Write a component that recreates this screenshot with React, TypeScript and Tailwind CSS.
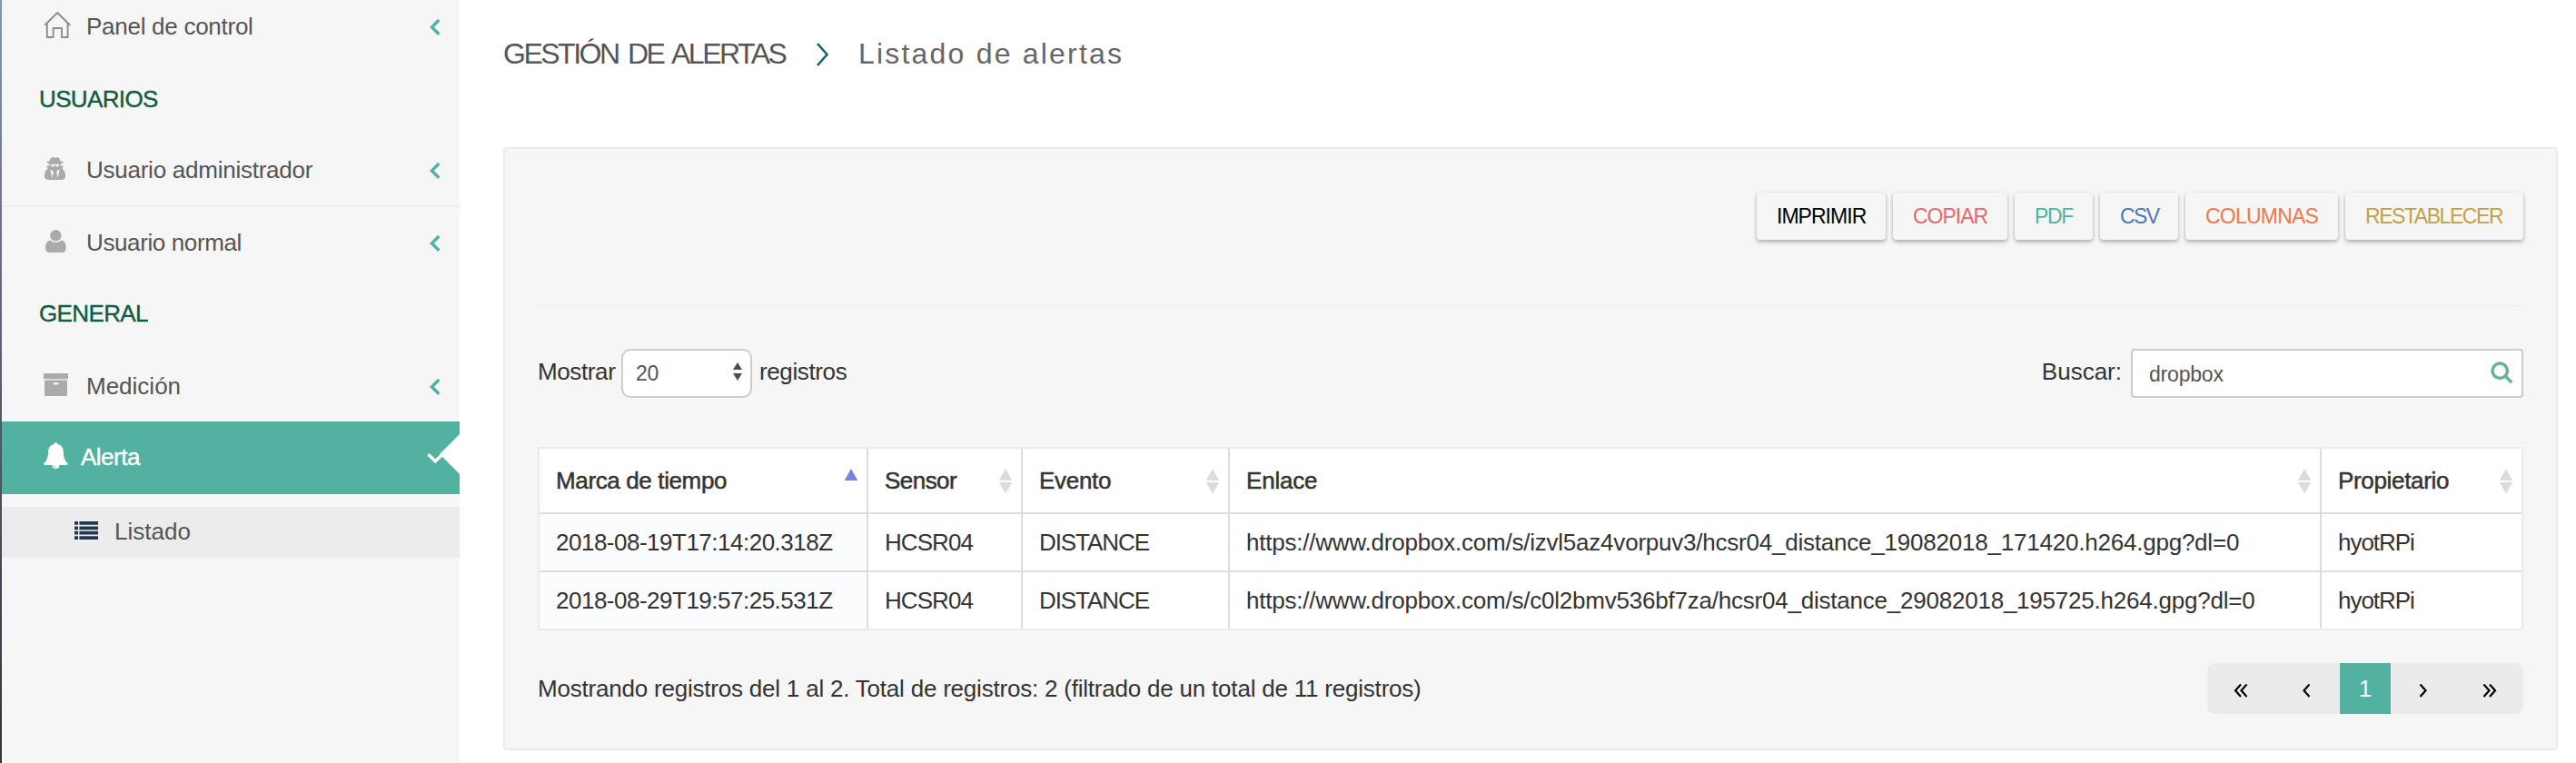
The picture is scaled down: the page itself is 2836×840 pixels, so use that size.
import React from "react";
import type { ReactNode } from "react";

function HomeIcon() {
  return (
    <svg viewBox="0 0 32 32" className="size-8 shrink-0" fill="none" stroke="#8c8c8c" strokeWidth="1.9" strokeLinejoin="round">
      <path d="M1.2 14.8 15.2 1l14 13.8" />
      <path d="M3.8 12.6V28h6.8V18h9.400v10h6.600V12.600" />
    </svg>
  );
}

function SpyIcon() {
  return (
    <svg viewBox="0 0 32 32" className="size-8 shrink-0" fill="#aaaaaa">
      <path
        transform="translate(0 0) scale(0.0163 0.0151)"
        d="M576 1664l96-448-96-128-128-64zm384 0l128-640-128 64-96 128zm96-1010q-2-4-4-6-10-8-96-8-70 0-167 19-7 2-21 2t-21-2q-97-19-167-19-86 0-96 8-2 2-4 6 2 18 4 27 2 3 7.500 6.500t7.500 10.500q2 4 7.500 20.500t7 20.500 7.500 17 8.500 17 9 14 12 13.500 14 9.500 17.500 8 20.500 4 24.500 2q36 0 59-12.500t32.500-30 14.500-34.500 11.500-29.500 17.500-12.500h12q11 0 17.500 12.500t11.500 29.500 14.500 34.500 32.500 30 59 12.500q13 0 24.500-2t20.500-4 17.500-8 14-9.500 12-13.500 9-14 8.500-17 7.500-17 7-20.500 7.500-20.500q2-7 7.500-10.500t7.500-6.500q2-9 4-27zm416 879q0 121-73 190t-194 69h-874q-121 0-194-69t-73-190q0-61 4.500-118t19-125.500 37.500-123.500 63.500-103.500 93.500-74.500l-90-220h214q-22-64-22-128 0-12 2-32-194-40-194-96 0-57 210-99 17-62 51.500-134t70.500-114q32-37 76-37 30 0 84 31t84 31 84-31 84-31q44 0 76 37 36 42 70.500 114t51.500 134q210 42 210 99 0 56-194 96 7 81-20 160h214l-82 225q63 33 107.500 96.500t65.500 143.500 29 151.500 8 157.500z"
      />
    </svg>
  );
}

function UserIcon() {
  return (
    <svg viewBox="0 0 32 32" className="size-8 shrink-0" fill="#aaaaaa">
      <circle cx="13.400" cy="8.300" r="6.200" />
      <path d="M7.300 13.500c1.700 1.500 3.800 2.300 6.100 2.300s4.400-.8 6.100-2.300c3.700.6 5.200 4 5.200 8.500 0 3.200-1.700 5-4.600 5H6.600C3.700 27 2 25.200 2 22c0-4.500 1.600-7.900 5.300-8.500z" />
    </svg>
  );
}

function ArchiveIcon() {
  return (
    <svg viewBox="0 0 32 32" className="size-8 shrink-0" fill="#aaaaaa">
      <rect x="0" y="2" width="27" height="6.300" rx="1" />
      <path fillRule="evenodd" d="M2 9.600h23a1 1 0 0 1 1 1V26a1 1 0 0 1-1 1H2a1 1 0 0 1-1-1V10.600a1 1 0 0 1 1-1zm9.300 2.600a1 1 0 0 0 0 2.200h4.400a1 1 0 0 0 0-2.200z" />
    </svg>
  );
}

function BellIcon() {
  return (
    <svg viewBox="0 0 32 32" className="size-8 shrink-0" fill="#ffffff">
      <path d="M13.400 0c1.100 0 1.900.9 1.800 2 4.100.8 6.500 4.100 6.600 8.200.1 6.500 1.700 10.200 5.200 13.100 0 .9-.8 1.700-1.800 1.700h-7.800a4 4 0 0 1-8 0H1.800C.8 25 0 24.200 0 23.300c3.400-2.900 5-6.600 5.100-13.100C5.200 6.100 7.500 2.800 11.600 2c-.1-1.100.7-2 1.800-2z" />
      <path d="M11 25.200a2.500 2.500 0 0 0 2.400 2.200" fill="none" stroke="#52b1a0" strokeWidth=".8" />
    </svg>
  );
}

function ListIcon() {
  return (
    <svg viewBox="0 0 32 32" className="size-8 shrink-0" fill="#22384f">
      <path d="M0 5h4v3.800H0zM5.400 5H26v3.800H5.400zM0 10.400h4v3.800H0zM5.400 10.400H26v3.800H5.400zM0 15.800h4v3.800H0zM5.400 15.800H26v3.800H5.400zM0 21.200h4V25H0zM5.400 21.200H26V25H5.400z" />
    </svg>
  );
}

function ChevronLeft() {
  return (
    <svg viewBox="0 0 14 20" className="mt-0.5 mr-5 h-5 w-3.5 shrink-0" fill="none" stroke="#4fb2a1" strokeWidth="3.400">
      <path d="M11.300 2 3.500 9.900l7.800 7.900" />
    </svg>
  );
}

function NavItem({ icon, children, className = "" }: { icon: ReactNode; children: ReactNode; className?: string }) {
  return (
    <a className={`flex items-center pl-[46px] text-[#555] ${className}`}>
      {icon}
      <span className="ml-[15px] flex-1">{children}</span>
      <ChevronLeft />
    </a>
  );
}

function Sidebar() {
  return (
    <nav className="h-full w-[504px] shrink-0 bg-[#f6f6f6] text-[26px] leading-[30px]">
      <NavItem icon={<HomeIcon />} className="h-[58px] tracking-[-0.27px]">Panel de control</NavItem>
      <h3 className="flex h-[90px] items-center pt-3 pl-[41px] tracking-[-0.64px] text-[#125c41] [-webkit-text-stroke:0.4px_#125c41]">USUARIOS</h3>
      <NavItem icon={<SpyIcon />} className="h-20 border-b-2 border-[#ececec] tracking-[-0.25px]">Usuario administrador</NavItem>
      <NavItem icon={<UserIcon />} className="h-[78px] tracking-[-0.38px]">Usuario normal</NavItem>
      <h3 className="flex h-[78px] items-center pl-[41px] tracking-[-0.63px] text-[#125c41] [-webkit-text-stroke:0.4px_#125c41]">GENERAL</h3>
      <NavItem icon={<ArchiveIcon />} className="h-20 pt-0.5">Medición</NavItem>
      <a className="relative flex h-20 items-center bg-[#52b1a0] pb-0.5 pl-[46px] text-white">
        <BellIcon />
        <span className="ml-[9px] tracking-[-0.5px] [-webkit-text-stroke:0.4px_#fff]">Alerta</span>
        <svg viewBox="0 0 40 44" className="absolute top-3.5 right-0 h-11 w-10" fill="none">
          <path d="M40 0v44L18 22z" fill="#fff" />
          <path d="M5.500 22.300l7.800 7.500 7.800-7.500" stroke="#fff" strokeWidth="3.400" />
        </svg>
      </a>
      <a className="mt-3.5 flex h-14 items-center bg-[#ececec] pb-0.5 pl-20 text-[#555]">
        <ListIcon />
        <span className="ml-3">Listado</span>
      </a>
    </nav>
  );
}

function SortIcon({ active = false }: { active?: boolean }) {
  return (
    <svg viewBox="0 0 16 28" className="mt-[3px] h-7 w-4 shrink-0">
      <path d="M8 0l7.300 13H.7z" fill={active ? "#7c83dc" : "#dcdcdc"} />
      {!active && <path d="M8 27.500L.7 15h14.600z" fill="#dcdcdc" />}
    </svg>
  );
}

const columns = [
  { title: "Marca de tiempo", className: "w-[362px] tracking-[-0.37px]", sorted: true },
  { title: "Sensor", className: "w-[170px] tracking-[-0.54px]" },
  { title: "Evento", className: "w-[228px] tracking-[-0.3px]" },
  { title: "Enlace", className: "w-[1202px] tracking-[-0.21px]" },
  { title: "Propietario", className: "w-[220px] tracking-[-0.33px]" },
];

const cellStyles = [
  "tracking-[-0.5px] bg-[#fafcfe]",
  "tracking-[-0.93px]",
  "tracking-[-1.08px]",
  "tracking-[-0.22px]",
  "tracking-[-1.04px]",
];

const rows = [
  ["2018-08-19T17:14:20.318Z", "HCSR04", "DISTANCE", "https://www.dropbox.com/s/izvl5az4vorpuv3/hcsr04_distance_19082018_171420.h264.gpg?dl=0", "hyotRPi"],
  ["2018-08-29T19:57:25.531Z", "HCSR04", "DISTANCE", "https://www.dropbox.com/s/c0l2bmv536bf7za/hcsr04_distance_29082018_195725.h264.gpg?dl=0", "hyotRPi"],
];

function AlertTable() {
  return (
    <table className="w-[2186px] table-fixed border-separate border-spacing-0 border-2 border-[#e7ecf1] bg-white text-[#333]">
      <thead>
        <tr className="h-[72px]">
          {columns.map((c, i) => (
            <th key={c.title} className={`border-b-2 border-[#ddd] p-0 text-left font-normal [-webkit-text-stroke:0.5px_#333] ${i < 4 ? "border-r-2" : ""} ${c.className}`}>
              <div className="flex items-center justify-between pr-[9px] pb-px pl-[18px]">
                {c.title}
                <SortIcon active={c.sorted} />
              </div>
            </th>
          ))}
        </tr>
      </thead>
      <tbody>
        {rows.map((row, r) => (
          <tr key={row[0]} className={r === 0 ? "h-16" : "h-[62px]"}>
            {row.map((cell, i) => (
              <td key={i} className={`border-[#ddd] py-0 pr-0 pl-[18px] whitespace-nowrap ${r === 0 ? "border-b-2" : ""} ${i < 4 ? "border-r-2" : ""} ${cellStyles[i]}`}>
                {cell}
              </td>
            ))}
          </tr>
        ))}
      </tbody>
    </table>
  );
}

const actions = [
  { label: "IMPRIMIR", className: "w-[142px] text-black tracking-[-0.97px]" },
  { label: "COPIAR", className: "w-[126px] text-[#e26a6a] tracking-[-1px]" },
  { label: "PDF", className: "w-[86px] text-[#4db3a2] tracking-[-1.4px]" },
  { label: "CSV", className: "w-[86px] text-[#4b77be] tracking-[-1.6px]" },
  { label: "COLUMNAS", className: "w-[168px] text-[#f2784b] tracking-[-0.77px]" },
  { label: "RESTABLECER", className: "w-[196px] text-[#c49f47] tracking-[-1.45px]" },
];

function Toolbar() {
  return (
    <div className="flex justify-end gap-2">
      {actions.map((a) => (
        <button key={a.label} className={`flex h-[52px] items-center rounded-[4px] pl-[22px] text-[23px] leading-[30px] shadow-[0_1px_4px_rgba(0,0,0,0.16),0_3px_4px_rgba(0,0,0,0.18)] ${a.className}`}>
          {a.label}
        </button>
      ))}
    </div>
  );
}

function Filters() {
  return (
    <div className="flex h-[54px] items-center justify-between">
      <label className="flex items-center tracking-[-0.38px]">
        <span className="w-[92px] pb-1">Mostrar</span>
        <span className="flex h-[54px] w-36 items-center justify-between rounded-[10px] border-2 border-[#ccc] bg-white pr-2 pl-3.5 text-[23px] tracking-[-0.4px] text-[#555]">
          20
          <svg viewBox="0 0 12 20" className="mb-1 h-5 w-3" fill="#4d4d4d">
            <path d="M6 0l5 8H1zM6 20l5-8H1z" />
          </svg>
        </span>
        <span className="ml-2 pb-1">registros</span>
      </label>
      <label className="flex items-center">
        <span className="mr-2.5 pb-1">Buscar:</span>
        <span className="flex h-[54px] w-[432px] items-center justify-between rounded-[4px] border-2 border-[#ccc] bg-white pr-2.5 pl-[18px] text-[23px] tracking-[-0.2px] text-[#555]">
          <span className="pt-0.5">dropbox</span>
          <svg viewBox="0 0 24 24" className="mb-0.5 size-6" fill="none" stroke="#6db193" strokeWidth="3.600" strokeLinecap="round">
            <circle cx="10.200" cy="10.200" r="8.200" />
            <path d="M16.300 16.300l5.800 5.800" />
          </svg>
        </span>
      </label>
    </div>
  );
}

const arrows = {
  first: "M11 7.500l-6 6.700 6 6.700M17.500 7.500l-6 6.700 6 6.700",
  prev: "M14.500 7.500l-6 6.700 6 6.700",
  next: "M7.500 7.500l6 6.700-6 6.700",
  last: "M5.500 7.500l6 6.700-6 6.700M12 7.500l6 6.700-6 6.700",
};

function PageArrow({ path, className }: { path: string; className: string }) {
  return (
    <button className={`flex h-14 items-center ${className}`}>
      <svg viewBox="0 0 24 24" className="size-6" fill="none" stroke="#000" strokeWidth="2.200">
        <path d={path} />
      </svg>
    </button>
  );
}

function Pager() {
  return (
    <div className="flex h-14 w-[348px] overflow-hidden rounded-[8px] bg-[#ebebeb]">
      <PageArrow path={arrows.first} className="w-[78px] pl-[26px]" />
      <PageArrow path={arrows.prev} className="w-[68px] pl-5" />
      <span className="flex h-14 w-14 items-center justify-center bg-[#52b1a0] pb-px text-white">1</span>
      <PageArrow path={arrows.next} className="w-[68px] pl-[25px]" />
      <PageArrow path={arrows.last} className="w-[78px] pl-[29px]" />
    </div>
  );
}

export default function App() {
  return (
    <div className="flex h-[840px] w-[2836px] overflow-hidden bg-white font-['Liberation_Sans',Arial,sans-serif] text-[26px] leading-[30px]">
      <div className="h-full w-0.5 shrink-0 bg-linear-to-b from-[#7d98bd] via-[#5b5a6e] to-[#3a3038]" />
      <Sidebar />
      <main className="flex flex-1 flex-col pl-12">
        <header className="flex h-[162px] items-start pt-[39px] text-[#666]">
          <h1 className="w-[312px] text-[32px] leading-10 tracking-[-2.5px] whitespace-nowrap text-[#555] [word-spacing:4px]">GESTIÓN DE ALERTAS</h1>
          <svg viewBox="0 0 18 26" className="mt-2 ml-[31px] h-[26px] w-[18px]" fill="none" stroke="#126663" strokeWidth="2.600">
            <path d="M3 1l10.500 12L3 25" />
          </svg>
          <span className="ml-[30px] text-[32px] leading-10 tracking-[2.2px]">Listado de alertas</span>
        </header>
        <section className="flex h-[664px] w-[2262px] flex-col rounded-[4px] border-2 border-[#e7ecf1] bg-[#f6f6f6] px-9 pt-12 text-[#333]">
          <Toolbar />
          <hr className="mt-[72px] mb-[46px] border-t-2 border-[#eef1f5]" />
          <Filters />
          <div className="mt-[54px]">
            <AlertTable />
          </div>
          <div className="mt-9 flex items-center justify-between">
            <p className="pb-px tracking-[-0.21px]">Mostrando registros del 1 al 2. Total de registros: 2 (filtrado de un total de 11 registros)</p>
            <Pager />
          </div>
        </section>
      </main>
    </div>
  );
}
